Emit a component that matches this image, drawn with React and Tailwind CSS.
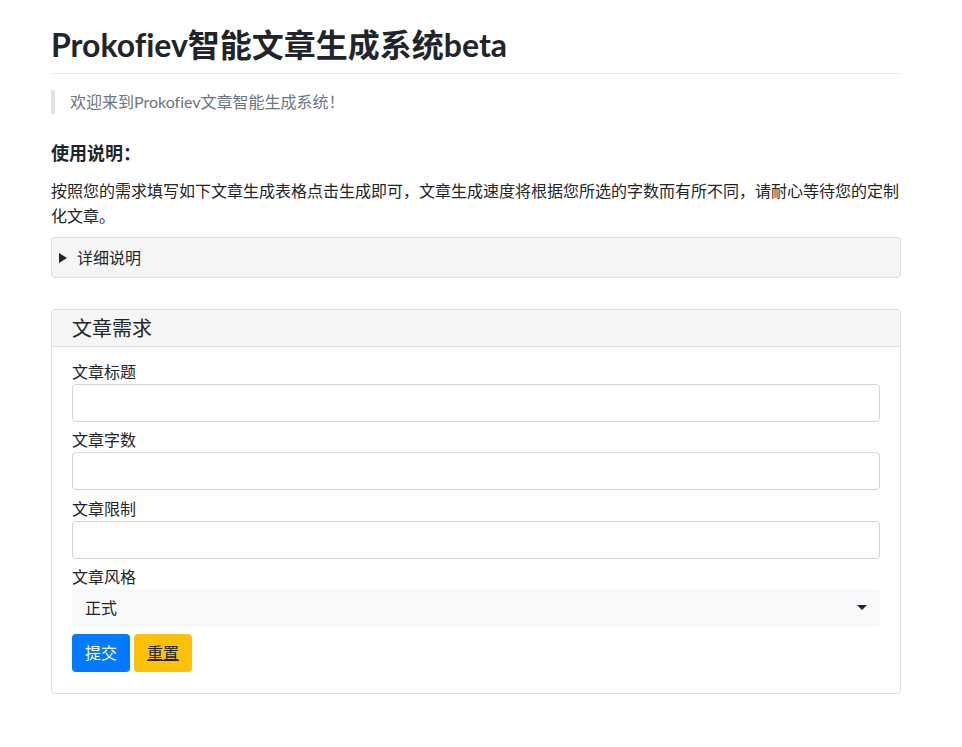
import React, { useState } from 'react';

const font = "font-['Lato','Noto_Sans_CJK_SC',sans-serif] [font-variant-ligatures:none] [font-feature-settings:'liga'_0]";

const Field = ({ label, value, onChange }) => (
  <div>
    <label className="block pt-[6.4px] text-[16px] leading-[24px]">{label}</label>
    <input
      type="text"
      value={value}
      onChange={onChange}
      className="block w-full h-[38px] border border-[#ced4da] rounded-[4px] px-3 text-[16px] bg-white focus:outline-none"
    />
  </div>
);

const App = () => {
  const [form, setForm] = useState({ title: '', count: '', limit: '', style: '正式' });

  const set = key => e => setForm(prev => ({ ...prev, [key]: e.target.value }));

  return (
    <div className={`${font} min-h-[747px] bg-white text-[#212529]`}>
      <div className="w-[850px] ml-[51px] pt-[26px] pb-10">
        <h1 className="text-[32px] leading-[38px] font-bold pb-[9px] border-b border-[#e9ecef]">
          Prokofiev智能文章生成系统beta
        </h1>

        {/* Welcome */}
        <div className="mt-4 border-l-4 border-[#dee2e6] pl-[15px] text-[16px] leading-[24px] text-[#6c757d]">
          欢迎来到Prokofiev文章智能生成系统！
        </div>

        <h3 className="mt-[26px] text-[18px] leading-[27px] font-bold">使用说明：</h3>
        <p className="mt-[11px] text-[16px] leading-[25px]">
          按照您的需求填写如下文章生成表格点击生成即可，文章生成速度将根据您所选的字数而有所不同，请耐心等待您的定制化文章。
        </p>

        <details className="mt-[9px] bg-[#f5f5f5] border border-[#dddddd] rounded-[4px]">
          <summary className="h-[39px] flex items-center pl-[7px] text-[16px] leading-[24px] cursor-pointer list-none">
            <span className="inline-block w-0 h-0 mr-[10px] border-l-[8px] border-t-[5px] border-b-[5px] border-l-[#212529] border-t-transparent border-b-transparent" />
            详细说明
          </summary>
        </details>

        {/* Form card */}
        <div className="mt-[31px] border border-[#dddddd] rounded-[4px]">
          <div className="h-[37px] bg-[#f5f5f5] border-b border-[#dddddd] rounded-t-[4px] flex items-center px-5 text-[20px] leading-[28px]">
            文章需求
          </div>
          <form
            className="px-5 pt-[6.6px] pb-[21px]"
            onSubmit={e => e.preventDefault()}
          >
            <Field label="文章标题" value={form.title} onChange={set('title')} />
            <Field label="文章字数" value={form.count} onChange={set('count')} />
            <Field label="文章限制" value={form.limit} onChange={set('limit')} />
            <div>
              <label className="block pt-[6.4px] text-[16px] leading-[24px]">文章风格</label>
              <div className="relative">
                <select
                  value={form.style}
                  onChange={set('style')}
                  className="block w-full h-[38px] bg-[#f8f9fa] rounded-[4px] pl-[13px] text-[16px] appearance-none focus:outline-none"
                >
                  <option>正式</option>
                  <option>轻松</option>
                  <option>幽默</option>
                </select>
                <span className="pointer-events-none absolute right-[13px] top-[16px] w-0 h-0 border-l-[5px] border-r-[5px] border-t-[5px] border-l-transparent border-r-transparent border-t-[#212529]" />
              </div>
            </div>
            <div className="flex gap-[4px] mt-[7px]">
              <button
                type="submit"
                className="h-[38px] w-[58px] rounded-[4px] bg-[#007bff] text-white text-[16px] leading-[24px]"
              >
                提交
              </button>
              <button
                type="reset"
                onClick={() => setForm({ title: '', count: '', limit: '', style: '正式' })}
                className="h-[38px] w-[58px] rounded-[4px] bg-[#ffc107] text-[#212529] text-[16px] leading-[24px] underline"
              >
                重置
              </button>
            </div>
          </form>
        </div>
      </div>
    </div>
  );
};

export default App;
